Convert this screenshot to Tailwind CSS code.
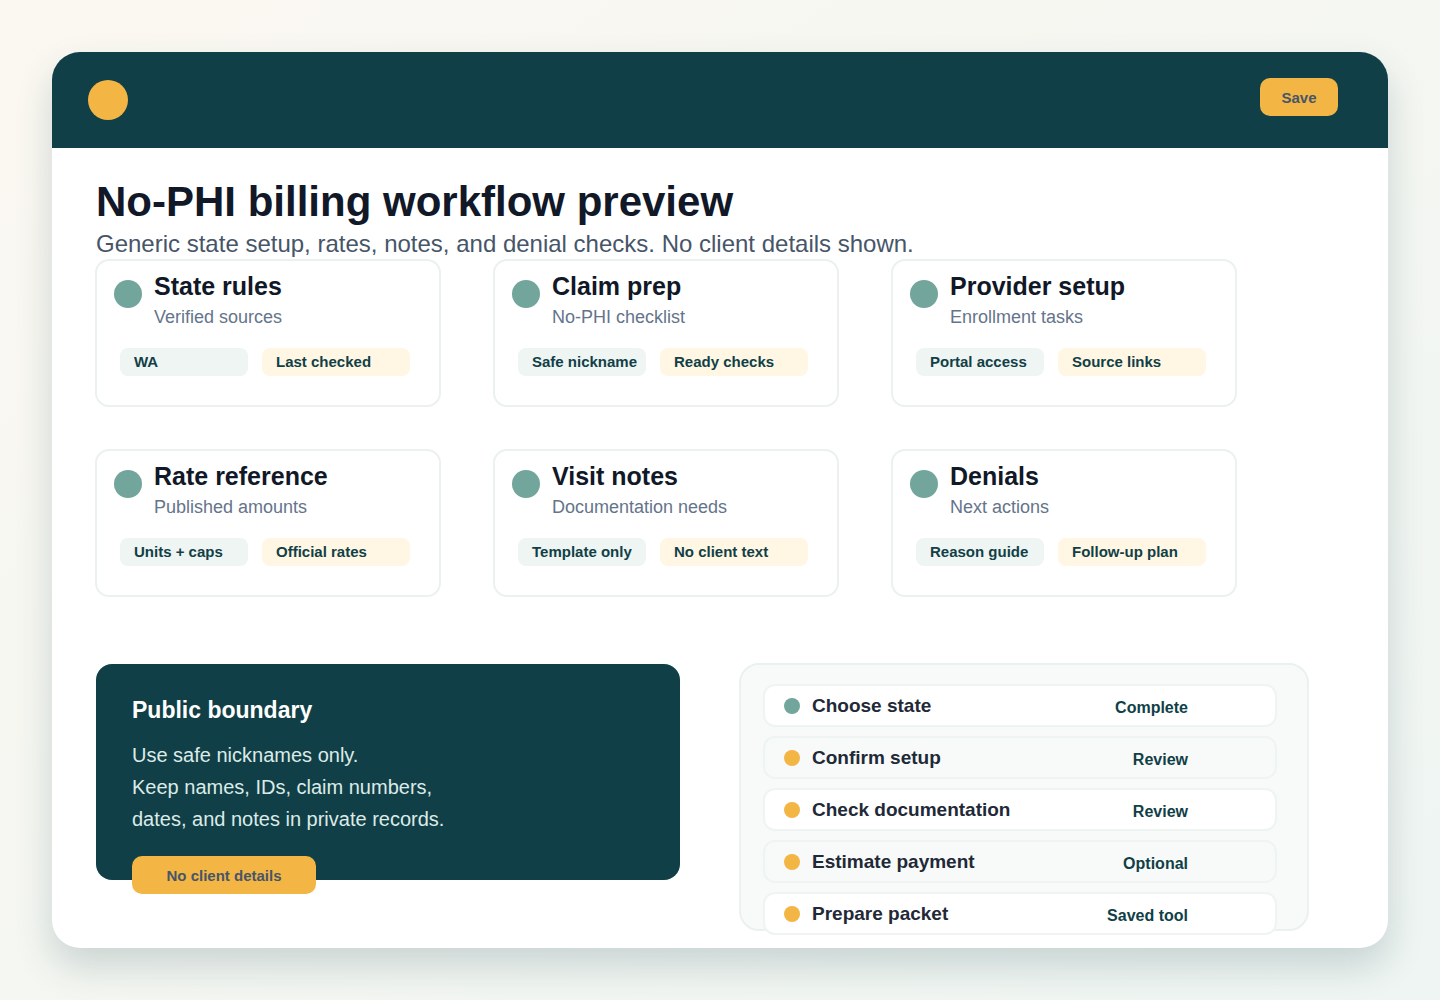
<!DOCTYPE html>
<html lang="en">
<head>
    <meta charset="UTF-8">
    <meta name="viewport" content="width=device-width, initial-scale=1.0">
    <title>No-PHI billing workflow preview</title>
    <script src="https://cdn.jsdelivr.net/npm/@tailwindcss/browser@4"></script>
</head>
<body class="font-['Liberation_Sans',Arial,sans-serif]">
    <div class="h-[1000px] overflow-hidden bg-gradient-to-br from-[#fbf8f1] to-[#eef5f2] p-[52px]">
        <div class="h-[896px] w-[1336px] rounded-[28px] bg-white shadow-[0_18px_36px_rgba(17,63,71,0.18)]">
            <header class="flex h-[96px] items-center justify-between rounded-t-[28px] bg-[#113f47] pl-[36px] pr-[50px]">
                <div class="h-10 w-10 rounded-full bg-[#f3b544]"></div>
                <button class="mb-[6px] h-[38px] w-[78px] rounded-[10px] bg-[#f3b544] pt-[2px] text-[15px] font-bold text-[#475569]">Save</button>
            </header>
            <main class="px-[44px]">
                <h1 class="mt-[30px] h-[48px] text-[42px] leading-[48px] font-bold text-[#111827]">No-PHI billing workflow preview</h1>
                <p class="h-[33px] pt-[1px] text-[24px] leading-[34px] text-[#475569]">Generic state setup, rates, notes, and denial checks. No client details shown.</p>

                <section class="-ml-[1px] grid w-[1142px] grid-cols-[346px_346px_346px] gap-x-[52px] gap-y-[42px]">
                    <div class="h-[148px] rounded-[14px] border-2 border-[#eaf1ef] px-[17px] pt-[11px]">
                        <div class="flex gap-[12px]">
                            <div class="mt-[8px] h-7 w-7 rounded-full bg-[#72a59b]"></div>
                            <div>
                                <h2 class="text-[25px] leading-[28px] font-bold text-[#111827]">State rules</h2>
                                <p class="mt-[6px] text-[18px] leading-[22px] text-[#64748b]">Verified sources</p>
                            </div>
                        </div>
                        <div class="mt-[20px] ml-[6px] flex gap-[14px] text-[15px] leading-[28px] font-bold text-[#113f47]">
                            <span class="h-7 w-[128px] rounded-[8px] bg-[#eef5f2] pl-[14px]">WA</span>
                            <span class="h-7 w-[148px] rounded-[8px] bg-[#fff7e3] pl-[14px]">Last checked</span>
                        </div>
                    </div>
                    <div class="h-[148px] rounded-[14px] border-2 border-[#eaf1ef] px-[17px] pt-[11px]">
                        <div class="flex gap-[12px]">
                            <div class="mt-[8px] h-7 w-7 rounded-full bg-[#72a59b]"></div>
                            <div>
                                <h2 class="text-[25px] leading-[28px] font-bold text-[#111827]">Claim prep</h2>
                                <p class="mt-[6px] text-[18px] leading-[22px] text-[#64748b]">No-PHI checklist</p>
                            </div>
                        </div>
                        <div class="mt-[20px] ml-[6px] flex gap-[14px] text-[15px] leading-[28px] font-bold text-[#113f47]">
                            <span class="h-7 w-[128px] rounded-[8px] bg-[#eef5f2] pl-[14px]">Safe nickname</span>
                            <span class="h-7 w-[148px] rounded-[8px] bg-[#fff7e3] pl-[14px]">Ready checks</span>
                        </div>
                    </div>
                    <div class="h-[148px] rounded-[14px] border-2 border-[#eaf1ef] px-[17px] pt-[11px]">
                        <div class="flex gap-[12px]">
                            <div class="mt-[8px] h-7 w-7 rounded-full bg-[#72a59b]"></div>
                            <div>
                                <h2 class="text-[25px] leading-[28px] font-bold text-[#111827]">Provider setup</h2>
                                <p class="mt-[6px] text-[18px] leading-[22px] text-[#64748b]">Enrollment tasks</p>
                            </div>
                        </div>
                        <div class="mt-[20px] ml-[6px] flex gap-[14px] text-[15px] leading-[28px] font-bold text-[#113f47]">
                            <span class="h-7 w-[128px] rounded-[8px] bg-[#eef5f2] pl-[14px]">Portal access</span>
                            <span class="h-7 w-[148px] rounded-[8px] bg-[#fff7e3] pl-[14px]">Source links</span>
                        </div>
                    </div>
                    <div class="h-[148px] rounded-[14px] border-2 border-[#eaf1ef] px-[17px] pt-[11px]">
                        <div class="flex gap-[12px]">
                            <div class="mt-[8px] h-7 w-7 rounded-full bg-[#72a59b]"></div>
                            <div>
                                <h2 class="text-[25px] leading-[28px] font-bold text-[#111827]">Rate reference</h2>
                                <p class="mt-[6px] text-[18px] leading-[22px] text-[#64748b]">Published amounts</p>
                            </div>
                        </div>
                        <div class="mt-[20px] ml-[6px] flex gap-[14px] text-[15px] leading-[28px] font-bold text-[#113f47]">
                            <span class="h-7 w-[128px] rounded-[8px] bg-[#eef5f2] pl-[14px]">Units + caps</span>
                            <span class="h-7 w-[148px] rounded-[8px] bg-[#fff7e3] pl-[14px]">Official rates</span>
                        </div>
                    </div>
                    <div class="h-[148px] rounded-[14px] border-2 border-[#eaf1ef] px-[17px] pt-[11px]">
                        <div class="flex gap-[12px]">
                            <div class="mt-[8px] h-7 w-7 rounded-full bg-[#72a59b]"></div>
                            <div>
                                <h2 class="text-[25px] leading-[28px] font-bold text-[#111827]">Visit notes</h2>
                                <p class="mt-[6px] text-[18px] leading-[22px] text-[#64748b]">Documentation needs</p>
                            </div>
                        </div>
                        <div class="mt-[20px] ml-[6px] flex gap-[14px] text-[15px] leading-[28px] font-bold text-[#113f47]">
                            <span class="h-7 w-[128px] rounded-[8px] bg-[#eef5f2] pl-[14px]">Template only</span>
                            <span class="h-7 w-[148px] rounded-[8px] bg-[#fff7e3] pl-[14px]">No client text</span>
                        </div>
                    </div>
                    <div class="h-[148px] rounded-[14px] border-2 border-[#eaf1ef] px-[17px] pt-[11px]">
                        <div class="flex gap-[12px]">
                            <div class="mt-[8px] h-7 w-7 rounded-full bg-[#72a59b]"></div>
                            <div>
                                <h2 class="text-[25px] leading-[28px] font-bold text-[#111827]">Denials</h2>
                                <p class="mt-[6px] text-[18px] leading-[22px] text-[#64748b]">Next actions</p>
                            </div>
                        </div>
                        <div class="mt-[20px] ml-[6px] flex gap-[14px] text-[15px] leading-[28px] font-bold text-[#113f47]">
                            <span class="h-7 w-[128px] rounded-[8px] bg-[#eef5f2] pl-[14px]">Reason guide</span>
                            <span class="h-7 w-[148px] rounded-[8px] bg-[#fff7e3] pl-[14px]">Follow-up plan</span>
                        </div>
                    </div>
                </section>

                <section class="mt-[67px] flex items-start">
                    <div class="h-[216px] w-[584px] shrink-0 rounded-[16px] bg-[#113f47] pl-[36px] pt-[32px]">
                        <h3 class="text-[23px] leading-[28px] font-bold text-white">Public boundary</h3>
                        <p class="mt-[15px] text-[20px] leading-[32px] text-[#dcebe7]">Use safe nicknames only.<br>Keep names, IDs, claim numbers,<br>dates, and notes in private records.</p>
                        <div class="mt-[21px] flex h-[38px] w-[184px] items-center justify-center rounded-[10px] bg-[#f3b544] pt-[2px] text-[15px] font-bold text-[#475569]">No client details</div>
                    </div>
                    <div class="-mt-[1px] ml-[59px] h-[268px] w-[570px] shrink-0 rounded-[20px] border-2 border-[#eaf1ef] bg-[#f8faf9] pl-[22px] pt-[19px]">
                        <div class="flex flex-col gap-[9px]">
                            <div class="flex h-[43px] w-[514px] items-center rounded-[12px] border-2 border-[#eef4f2] bg-white pl-[19px]">
                                <span class="h-4 w-4 rounded-full bg-[#72a59b]"></span>
                                <span class="mt-[2px] ml-[12px] text-[19px] font-bold text-[#1f2937]">Choose state</span>
                                <span class="mt-[5px] mr-[87px] ml-auto text-[16px] font-bold text-[#113f47]">Complete</span>
                            </div>
                            <div class="flex h-[43px] w-[514px] items-center rounded-[12px] border-2 border-[#eef4f2] bg-[#f8faf9] pl-[19px]">
                                <span class="h-4 w-4 rounded-full bg-[#f3b544]"></span>
                                <span class="mt-[2px] ml-[12px] text-[19px] font-bold text-[#1f2937]">Confirm setup</span>
                                <span class="mt-[5px] mr-[87px] ml-auto text-[16px] font-bold text-[#113f47]">Review</span>
                            </div>
                            <div class="flex h-[43px] w-[514px] items-center rounded-[12px] border-2 border-[#eef4f2] bg-white pl-[19px]">
                                <span class="h-4 w-4 rounded-full bg-[#f3b544]"></span>
                                <span class="mt-[2px] ml-[12px] text-[19px] font-bold text-[#1f2937]">Check documentation</span>
                                <span class="mt-[5px] mr-[87px] ml-auto text-[16px] font-bold text-[#113f47]">Review</span>
                            </div>
                            <div class="flex h-[43px] w-[514px] items-center rounded-[12px] border-2 border-[#eef4f2] bg-[#f8faf9] pl-[19px]">
                                <span class="h-4 w-4 rounded-full bg-[#f3b544]"></span>
                                <span class="mt-[2px] ml-[12px] text-[19px] font-bold text-[#1f2937]">Estimate payment</span>
                                <span class="mt-[5px] mr-[87px] ml-auto text-[16px] font-bold text-[#113f47]">Optional</span>
                            </div>
                            <div class="flex h-[43px] w-[514px] items-center rounded-[12px] border-2 border-[#eef4f2] bg-white pl-[19px]">
                                <span class="h-4 w-4 rounded-full bg-[#f3b544]"></span>
                                <span class="mt-[2px] ml-[12px] text-[19px] font-bold text-[#1f2937]">Prepare packet</span>
                                <span class="mt-[5px] mr-[87px] ml-auto text-[16px] font-bold text-[#113f47]">Saved tool</span>
                            </div>
                        </div>
                    </div>
                </section>
            </main>
        </div>
    </div>
</body>
</html>
